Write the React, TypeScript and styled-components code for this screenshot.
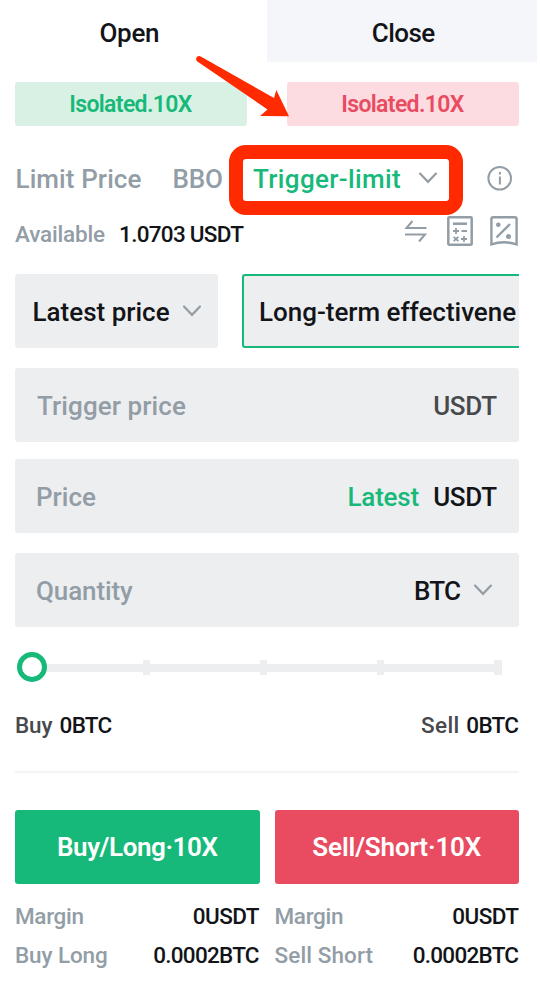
import React from "react";
import styled, { createGlobalStyle } from "styled-components";

const color = {
  ink: "#121418",
  soft: "#47494c",
  muted: "#929da6",
  green: "#16b979",
  red: "#e94b60",
  field: "#edeef0",
  mark: "#ff2a00",
};

const GlobalStyle = createGlobalStyle`
  * { box-sizing: border-box; }
  body { margin: 0; background: #fff; font-family: Roboto, "Liberation Sans", sans-serif; overflow: hidden; }
`;

const Page = styled.main`
  position: relative;
  width: 540px;
  height: 994px;
  background: #fff;
  overflow: hidden;
`;

const Text = styled.span<{ $c?: string; $ls?: number; $small?: boolean }>`
  display: block;
  flex: none;
  white-space: pre;
  line-height: 30px;
  font-size: ${(p) => (p.$small ? 22.5 : 26)}px;
  font-weight: 500;
  letter-spacing: ${(p) => p.$ls ?? 0}px;
  margin-right: ${(p) => -(p.$ls ?? 0)}px;
  color: ${(p) => p.$c ?? color.ink};
`;

const Tabs = styled.nav`
  display: grid;
  grid-template-columns: 267px 270px;
  height: 61.5px;
`;

const Tab = styled.div<{ $idle?: boolean }>`
  display: flex;
  justify-content: center;
  padding: ${(p) => (p.$idle ? "18px 0 0 3px" : "18px 8px 0 0")};
  background: ${(p) => (p.$idle ? "#f5f6f9" : "transparent")};
`;

const Body = styled.div`
  display: flex;
  flex-direction: column;
  padding: 20px 21px 0 15px;
`;

const Modes = styled.div`
  display: flex;
  justify-content: space-between;
  height: 44px;
`;

const Mode = styled.div<{ $sell?: boolean }>`
  width: 232px;
  padding-right: 1px;
  border-radius: 3px;
  font-size: 23px;
  font-weight: 600;
  letter-spacing: -0.65px;
  line-height: 45px;
  text-align: center;
  color: ${(p) => (p.$sell ? color.red : color.green)};
  background: ${(p) => (p.$sell ? "#fcdce1" : "#d9f1e4")};
`;

const OrderTypes = styled.div`
  display: grid;
  grid-template-columns: 157px 66px 248px 28px;
  align-items: center;
  height: 40px;
  margin: 33px 0 0 0.5px;
`;

const ActiveType = styled.div`
  position: relative;
  display: flex;
  align-items: center;
  gap: 17px;
  padding-left: 14.5px;
`;

const Highlight = styled.div`
  position: absolute;
  left: -10px;
  top: -18.5px;
  width: 234.5px;
  height: 69.5px;
  border: 14.5px solid ${color.mark};
  border-radius: 17px;
`;

const Balance = styled.div`
  display: flex;
  align-items: center;
  height: 36px;
  margin-top: 17px;
  gap: 14px;
`;

const Tools = styled.div`
  display: flex;
  align-items: center;
  gap: 17px;
  margin: -5px 1px 0 auto;
`;

const Selects = styled.div`
  display: grid;
  grid-template-columns: 202.5px 277px;
  gap: 24.5px;
  height: 73.5px;
  margin-top: 22.5px;
`;

const Select = styled.div<{ $active?: boolean }>`
  display: flex;
  align-items: center;
  gap: 12px;
  overflow: hidden;
  background: ${color.field};
  border-radius: ${(p) => (p.$active ? "3px 0 0 3px" : "3px")};
  border: ${(p) => (p.$active ? `2px solid ${color.green}` : "0")};
  border-right: 0;
  padding: 2px 0 0 ${(p) => (p.$active ? 15 : 17.5)}px;
`;

const Field = styled.div<{ $gap: number; $left?: number; $right?: number }>`
  display: flex;
  align-items: center;
  height: 74px;
  margin-top: ${(p) => p.$gap}px;
  padding: 2px ${(p) => p.$right ?? 22}px 0 ${(p) => p.$left ?? 21}px;
  background: ${color.field};
  border-radius: 3px;
`;

const Unit = styled.div<{ $gap?: number }>`
  display: flex;
  align-items: center;
  gap: ${(p) => p.$gap ?? 14}px;
  margin-left: auto;
`;

const Slider = styled.div`
  position: relative;
  display: flex;
  align-items: center;
  height: 30px;
  margin: 25px 17.5px 0 2px;
`;

const Track = styled.div`
  flex: 1;
  display: flex;
  align-items: center;
  justify-content: space-between;
  height: 8px;
  margin: 2px 0 0 8.5px;
  background: #edeef0;
`;

const Tick = styled.i`
  width: 7.5px;
  height: 15px;
  margin-top: -1px;
  background: #edeef0;
`;

const Thumb = styled.div`
  position: absolute;
  left: 0;
  top: 0;
  width: 30px;
  height: 30px;
  border: 5px solid ${color.green};
  border-radius: 50%;
  background: #fff;
`;

const Totals = styled.div`
  display: flex;
  justify-content: space-between;
  height: 30px;
  margin-top: 28.4px;
`;

const Pair = styled.div`
  display: flex;
  gap: 7px;
`;

const Divider = styled.hr`
  width: 100%;
  height: 2px;
  margin: 30.6px 0 0;
  border: 0;
  background: #f4f4f6;
`;

const Actions = styled.div`
  display: grid;
  grid-template-columns: 1fr 1fr;
  column-gap: 15px;
  margin-top: 37px;
`;

const Action = styled.button<{ $sell?: boolean }>`
  width: 100%;
  height: 74px;
  padding: 1px 0 0;
  border: 0;
  border-radius: 3px;
  font: 600 26px Roboto, sans-serif;
  letter-spacing: ${(p) => (p.$sell ? -0.15 : -0.43)}px;
  color: #fff;
  background: ${(p) => (p.$sell ? color.red : color.green)};
`;

const Details = styled.div`
  display: grid;
  grid-auto-rows: 39.3px;
  padding-top: 17px;
`;

const Detail = styled.div`
  display: flex;
  justify-content: space-between;
`;

const Arrow = styled.svg`
  position: absolute;
  left: 190px;
  top: 50px;
`;

const Chevron = () => (
  <svg width="20" height="14" viewBox="0 0 20 14" fill="none" stroke={color.muted} strokeWidth="2.2">
    <path d="M2 1.6 L10 9.8 L18 1.6" strokeLinecap="round" />
  </svg>
);

const Info = () => (
  <svg width="26" height="26" viewBox="0 0 26 26" fill="none" stroke={color.muted} strokeWidth="2">
    <circle cx="12.7" cy="12.3" r="11.3" />
    <path d="M12.9 10.5 V18.5 M12.9 6.1 V8.5" />
  </svg>
);

const Swap = () => (
  <svg width="26" height="30" viewBox="0 0 26 30" fill="none" stroke={color.muted} strokeWidth="2">
    <path d="M22.5 12 H2.5 L8.5 5 M1 18.5 H21 L15 25.5" />
  </svg>
);

const Calculator = () => (
  <svg width="26" height="30" viewBox="0 0 26 30" fill="none" stroke={color.muted}>
    <rect x="1.3" y="1.3" width="23.4" height="27.4" rx="1" strokeWidth="2.5" />
    <path d="M6 7.7 H20" strokeWidth="2.5" />
    <path d="M6 15 H12 M9 12 V18 M14.5 15 H20 M6.6 20.8 L11.4 25.2 M11.4 20.8 L6.6 25.2 M14 23 H20" strokeWidth="1.8" />
    <path d="M17 20 V22 M17 24 V26" strokeWidth="1.8" />
  </svg>
);

const Coupon = () => (
  <svg width="28" height="30" viewBox="0 0 28 30" fill="none" stroke={color.muted} strokeWidth="2.4">
    <path d="M1.4 28.3 V3 Q1.4 1.3 3.2 1.3 H24.8 Q26.6 1.3 26.6 3 V28.3 Q14 24.3 1.4 28.3 Z" />
    <path d="M6.5 21.5 L20 8" />
    <circle cx="8.3" cy="8.7" r="2.3" fill={color.muted} stroke="none" />
    <circle cx="18.5" cy="20.5" r="2.5" fill={color.muted} stroke="none" />
  </svg>
);

export default function App() {
  return (
    <Page>
      <GlobalStyle />
      <Tabs>
        <Tab><Text $ls={-0.32}>Open</Text></Tab>
        <Tab $idle><Text $ls={-0.56}>Close</Text></Tab>
      </Tabs>
      <Body>
        <Modes>
          <Mode>Isolated.10X</Mode>
          <Mode $sell>Isolated.10X</Mode>
        </Modes>
        <OrderTypes>
          <Text $c={color.muted} $ls={0.1}>Limit Price</Text>
          <Text $c={color.muted} $ls={-0.17}>BBO</Text>
          <ActiveType>
            <Text $c={color.green} $ls={0.35}>Trigger-limit</Text>
            <Chevron />
            <Highlight />
          </ActiveType>
          <Info />
        </OrderTypes>
        <Balance>
          <Text $small $c={color.muted} $ls={-0.18}>Available</Text>
          <Text $small $ls={-0.72}>1.0703 USDT</Text>
          <Tools><Swap /><Calculator /><Coupon /></Tools>
        </Balance>
        <Selects>
          <Select><Text>Latest price</Text><Chevron /></Select>
          <Select $active><Text $ls={-0.02}>Long-term effectivene</Text></Select>
        </Selects>
        <Field $gap={20} $left={22}>
          <Text $c={color.muted} $ls={0.1}>Trigger price</Text>
          <Unit><Text $c={color.soft} $ls={-0.37}>USDT</Text></Unit>
        </Field>
        <Field $gap={17.5}>
          <Text $c={color.muted}>Price</Text>
          <Unit><Text $c={color.green} $ls={-0.2}>Latest</Text><Text $ls={-0.37}>USDT</Text></Unit>
        </Field>
        <Field $gap={20} $right={26}>
          <Text $c={color.muted} $ls={-0.11}>Quantity</Text>
          <Unit $gap={12}><Text $ls={-0.78}>BTC</Text><Chevron /></Unit>
        </Field>
        <Slider>
          <Track><Tick /><Tick /><Tick /><Tick /><Tick /></Track>
          <Thumb />
        </Slider>
        <Totals>
          <Pair><Text $small $c={color.soft} $ls={-0.1}>Buy</Text><Text $small $ls={-0.7}>0BTC</Text></Pair>
          <Pair><Text $small $c={color.soft} $ls={0.4}>Sell</Text><Text $small $ls={-0.7}>0BTC</Text></Pair>
        </Totals>
        <Divider />
        <Actions>
          <Action>Buy/Long·10X</Action>
          <Action $sell>Sell/Short·10X</Action>
          <Details>
            <Detail><Text $small $c={color.muted} $ls={-0.31}>Margin</Text><Text $small $ls={-0.57}>0USDT</Text></Detail>
            <Detail><Text $small $c={color.muted} $ls={-0.11}>Buy Long</Text><Text $small $ls={-0.75}>0.0002BTC</Text></Detail>
          </Details>
          <Details>
            <Detail><Text $small $c={color.muted} $ls={-0.31}>Margin</Text><Text $small $ls={-0.57}>0USDT</Text></Detail>
            <Detail><Text $small $c={color.muted} $ls={0.1}>Sell Short</Text><Text $small $ls={-0.75}>0.0002BTC</Text></Detail>
          </Details>
        </Actions>
      </Body>
      <Arrow width="104" height="72" viewBox="190 50 104 72" fill={color.mark}>
        <path d="M200.3 56.3 L274 98 L276.3 90 L289 116.2 L260 116 L267.5 109.5 L197 61.2 Q195.6 59.8 196.4 57.5 Q198 55.2 200.3 56.3 Z" />
      </Arrow>
    </Page>
  );
}
